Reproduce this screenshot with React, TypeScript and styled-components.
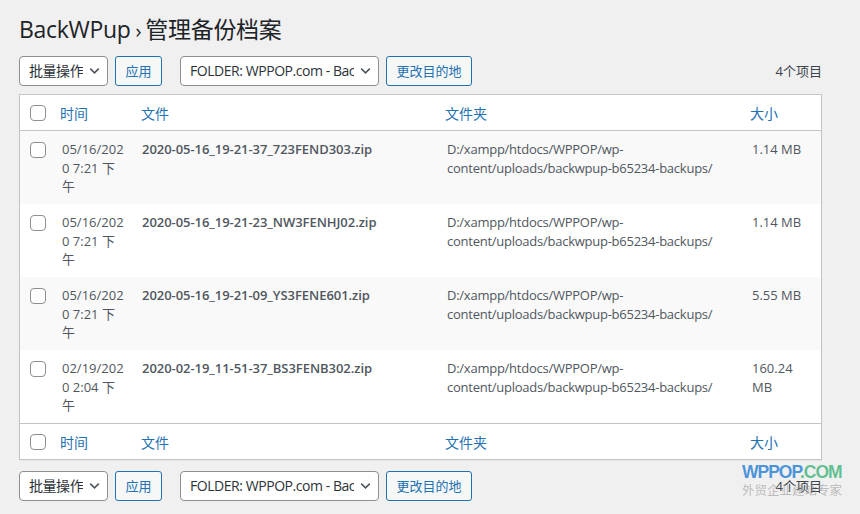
import React from "react";
import styled, { createGlobalStyle } from "styled-components";

const Global = createGlobalStyle`
  html, body { margin: 0; padding: 0; }
  body {
    background: #f0f0f1;
    font-family: "Open Sans", "Noto Sans CJK SC", sans-serif;
    color: #3c434a;
    font-size: 13px;
  }
`;

const Wrap = styled.div`
  position: relative;
  margin: 0 38px 0 19px;
  padding-top: 13px;
`;

const Title = styled.h1`
  margin: 0;
  font-size: 23px;
  font-weight: 400;
  line-height: 32px;
  color: #1d2327;
  letter-spacing: -0.3px;
`;

const Sep = styled.span`
  font-size: 20px;
  margin: 0 4px 0 5px;
`;

const Toolbar = styled.div<{ $top: number; $bottom: number }>`
  display: flex;
  align-items: center;
  height: 30px;
  margin-top: ${(p) => p.$top}px;
  margin-bottom: ${(p) => p.$bottom}px;
`;

const Select = styled.div<{ $w: number; $gap: number }>`
  position: relative;
  box-sizing: border-box;
  width: ${(p) => p.$w}px;
  height: 30px;
  margin-right: 7px;
  margin-left: ${(p) => p.$gap}px;
  padding: 0 24px 0 9px;
  background: #fff;
  border: 1px solid #8c8f94;
  border-radius: 4px;
  font-size: 14px;
  line-height: 28px;
  color: #2c3338;
  letter-spacing: -0.45px;
`;

const SelectText = styled.div`
  white-space: nowrap;
  overflow: hidden;
`;

const Chevron = styled.svg`
  position: absolute;
  right: 7px;
  top: 10px;
`;

const Button = styled.div<{ $w: number }>`
  box-sizing: border-box;
  width: ${(p) => p.$w}px;
  height: 30px;
  border: 1px solid #2271b1;
  border-radius: 3px;
  background: #f6f7f7;
  color: #2271b1;
  font-size: 13px;
  line-height: 28px;
  text-align: center;
`;

const Count = styled.div`
  margin-left: auto;
  font-size: 13px;
  color: #3c434a;
  padding-bottom: 1px;
`;

const Table = styled.div`
  background: #fff;
  border: 1px solid #c3c4c7;
  box-shadow: 0 1px 1px rgba(0, 0, 0, 0.04);
`;

const Row = styled.div<{ $kind: "head" | "foot" | "odd" | "even" }>`
  display: grid;
  grid-template-columns: 32px 81px 304px 305px 1fr;
  background: ${(p) => (p.$kind === "odd" ? "#f9f9f9" : "#fff")};
  border-bottom: ${(p) => (p.$kind === "head" ? "1px solid #c3c4c7" : "none")};
  border-top: ${(p) => (p.$kind === "foot" ? "1px solid #c3c4c7" : "none")};
`;

const HeadCell = styled.div<{ $pl?: number }>`
  display: flex;
  align-items: center;
  height: 35px;
  padding-left: ${(p) => p.$pl ?? 8}px;
  font-size: 14px;
  color: #2271b1;
`;

const Cell = styled.div<{ $pl?: number; $w?: number }>`
  padding: 9px 0 8.5px ${(p) => p.$pl ?? 9}px;
  line-height: 18.5px;
  font-size: 13px;
  color: #50575e;
  & > span {
    display: block;
    width: ${(p) => (p.$w ? `${p.$w}px` : "auto")};
  }
`;

const DateText = styled.span`
  word-break: break-all;
`;

const FileName = styled.div`
  padding: 9px 0 0 9px;
  line-height: 18.5px;
  font-size: 13px;
  font-weight: 600;
  color: #50575e;
  letter-spacing: -0.05px;
`;

const PathText = styled.span`
  display: block;
  width: 290px;
  letter-spacing: -0.25px;
`;

const Box = styled.div`
  box-sizing: border-box;
  width: 16px;
  height: 16px;
  border: 1px solid #8c8f94;
  border-radius: 4px;
  background: #fff;
`;

const CheckCell = styled.div<{ $head?: boolean }>`
  display: flex;
  align-items: ${(p) => (p.$head ? "center" : "flex-start")};
  padding-left: 10px;
  padding-top: ${(p) => (p.$head ? 0 : 11)}px;
  height: ${(p) => (p.$head ? "35px" : "auto")};
`;

const Mark = styled.div`
  position: absolute;
  left: 723px;
  top: 463px;
  width: 110px;
  pointer-events: none;
`;

const MarkTop = styled.div`
  font-family: "Liberation Sans", Arial, sans-serif;
  font-weight: 700;
  font-size: 17.5px;
  line-height: 19px;
  letter-spacing: -1px;
`;

const Blue = styled.span`
  color: rgba(46, 132, 214, 0.85);
`;
const Green = styled.span`
  color: rgba(72, 182, 128, 0.85);
`;

const MarkSub = styled.div`
  font-size: 12.5px;
  line-height: 18px;
  margin-top: 0;
  color: rgba(150, 150, 150, 0.6);
  white-space: nowrap;
`;

const ChevronIcon = () => (
  <Chevron width="11" height="8" viewBox="0 0 11 8">
    <path d="M1.2 1.6 L5.5 5.8 L9.8 1.6" fill="none" stroke="#50575e" strokeWidth="1.6" />
  </Chevron>
);

const rows = [
  { d: "05/16/2020 7:21 下午", f: "2020-05-16_19-21-37_723FEND303.zip", s: "1.14 MB" },
  { d: "05/16/2020 7:21 下午", f: "2020-05-16_19-21-23_NW3FENHJ02.zip", s: "1.14 MB" },
  { d: "05/16/2020 7:21 下午", f: "2020-05-16_19-21-09_YS3FENE601.zip", s: "5.55 MB" },
  { d: "02/19/2020 2:04 下午", f: "2020-02-19_11-51-37_BS3FENB302.zip", s: "160.24 MB" },
];

const Nav = ({ top, bottom }: { top: number; bottom: number }) => (
  <Toolbar $top={top} $bottom={bottom}>
    <Select $w={89} $gap={0}>
      <SelectText>批量操作</SelectText>
      <ChevronIcon />
    </Select>
    <Button $w={47}>应用</Button>
    <Select $w={199} $gap={18}>
      <SelectText>FOLDER: WPPOP.com - Backups</SelectText>
      <ChevronIcon />
    </Select>
    <Button $w={86}>更改目的地</Button>
    <Count>4个项目</Count>
  </Toolbar>
);

const HeaderRow = ({ kind }: { kind: "head" | "foot" }) => (
  <Row $kind={kind}>
    <CheckCell $head>
      <Box />
    </CheckCell>
    <HeadCell $pl={8}>时间</HeadCell>
    <HeadCell $pl={8}>文件</HeadCell>
    <HeadCell $pl={8}>文件夹</HeadCell>
    <HeadCell $pl={8}>大小</HeadCell>
  </Row>
);

export default function App() {
  return (
    <>
      <Global />
      <Wrap>
        <Title>
          BackWPup<Sep>›</Sep>管理备份档案
        </Title>
        <Nav top={9} bottom={8} />
        <Table>
          <HeaderRow kind="head" />
          {rows.map((r, i) => (
            <Row key={i} $kind={i % 2 === 0 ? "odd" : "even"}>
              <CheckCell>
                <Box />
              </CheckCell>
              <Cell $pl={10} $w={64}>
                <DateText>{r.d}</DateText>
              </Cell>
              <FileName>{r.f}</FileName>
              <Cell $pl={10}>
                <PathText>D:/xampp/htdocs/WPPOP/wp-content/uploads/backwpup-b65234-backups/</PathText>
              </Cell>
              <Cell $pl={10} $w={52}>
                <span>{r.s}</span>
              </Cell>
            </Row>
          ))}
          <HeaderRow kind="foot" />
        </Table>
        <Nav top={11} bottom={0} />
        <Mark>
          <MarkTop>
            <Blue>WPPOP</Blue>
            <Green>.COM</Green>
          </MarkTop>
          <MarkSub>外贸企业建站专家</MarkSub>
        </Mark>
      </Wrap>
    </>
  );
}
